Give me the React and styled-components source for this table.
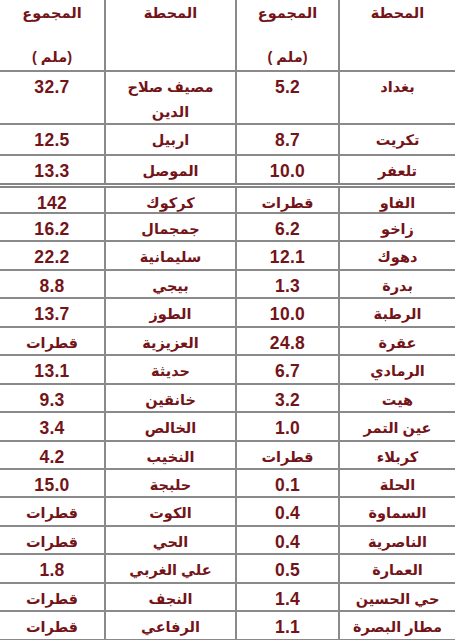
import React from "react";
import styled, { createGlobalStyle } from "styled-components";

const GlobalStyle = createGlobalStyle`
  html, body {
    margin: 0;
    padding: 0;
    background: #ffffff;
    overflow: hidden;
  }
`;

const Sheet = styled.div`
  width: 455px;
  height: 640px;
  overflow: hidden;
  direction: rtl;
  background: #ffffff;
  color: #731419;
  font-family: "Liberation Sans", "DejaVu Sans", sans-serif;
  font-weight: bold;
`;

const Row = styled.div`
  display: grid;
  grid-template-columns: 117px 103px 131px 104px;
  height: ${(props) => props.h}px;
  box-sizing: border-box;
  border-bottom: ${(props) =>
    props.double ? "5px double #858585" : "2px solid #8a8a8a"};
`;

const Cell = styled.div`
  box-sizing: border-box;
  border-left: 2px solid #8a8a8a;
  text-align: center;
  padding-top: 3px;
  line-height: 25px;
  white-space: pre-line;
  overflow: hidden;
  font-size: ${(props) => (props.num ? "17.5px" : "14.5px")};
  letter-spacing: ${(props) => (props.num ? "0.3px" : "0")};

  &:last-child {
    border-left: none;
  }
`;

const HeadCell = styled(Cell)`
  display: flex;
  flex-direction: column;
  justify-content: space-between;
  padding: 2px 0 1px;
  line-height: 23px;
  font-size: 14.5px;
`;

const rows = [
  ["بغداد", "5.2", "مصيف صلاح\nالدين", "32.7"],
  ["تكريت", "8.7", "اربيل", "12.5"],
  ["تلعفر", "10.0", "الموصل", "13.3"],
  ["الفاو", "قطرات", "كركوك", "142"],
  ["زاخو", "6.2", "جمجمال", "16.2"],
  ["دهوك", "12.1", "سليمانية", "22.2"],
  ["بدرة", "1.3", "بيجي", "8.8"],
  ["الرطبة", "10.0", "الطوز", "13.7"],
  ["عقرة", "24.8", "العزيزية", "قطرات"],
  ["الرمادي", "6.7", "حديثة", "13.1"],
  ["هيت", "3.2", "خانقين", "9.3"],
  ["عين التمر", "1.0", "الخالص", "3.4"],
  ["كربلاء", "قطرات", "النخيب", "4.2"],
  ["الحلة", "0.1", "حلبجة", "15.0"],
  ["السماوة", "0.4", "الكوت", "قطرات"],
  ["الناصرية", "0.4", "الحي", "قطرات"],
  ["العمارة", "0.5", "علي الغربي", "1.8"],
  ["حي الحسين", "1.4", "النجف", "قطرات"],
  ["مطار البصرة", "1.1", "الرفاعي", "قطرات"],
];

// heights of each data row, measured off the grid lines
const heights = [53, 31, 32, 26];
const rowHeight = (i) => (i < heights.length ? heights[i] : 28.45);

const isNumber = (text) => /^[0-9.]+$/.test(text);

const App = () => {
  return (
    <Sheet>
      <GlobalStyle />
      <Row h={72}>
        <HeadCell>
          <span>المحطة</span>
        </HeadCell>
        <HeadCell>
          <span>المجموع</span>
          <span>(ملم )</span>
        </HeadCell>
        <HeadCell>
          <span>المحطة</span>
        </HeadCell>
        <HeadCell>
          <span>المجموع</span>
          <span>(ملم )</span>
        </HeadCell>
      </Row>
      {rows.map((row, i) => (
        <Row key={i} h={rowHeight(i)} double={i === 2}>
          {row.map((text, j) => (
            <Cell key={j} num={isNumber(text)}>
              {text}
            </Cell>
          ))}
        </Row>
      ))}
    </Sheet>
  );
};

export default App;
